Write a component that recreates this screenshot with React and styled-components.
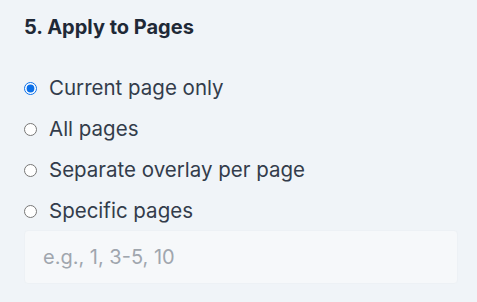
import React, { useState } from "react";
import styled, { createGlobalStyle } from "styled-components";

const Global = createGlobalStyle`
  html, body {
    margin: 0;
    padding: 0;
    background: #f0f4f8;
    font-family: Inter, "Noto Sans", sans-serif;
  }
`;

const Section = styled.section`
  padding: 13px 19px 0 24px;
`;

const Title = styled.h3`
  margin: 0 0 33px;
  font-size: 20px;
  font-weight: 700;
  color: #1f2937;
  line-height: 28px;
`;

const Options = styled.div`
  display: flex;
  flex-direction: column;
  gap: 13px;
`;

const Option = styled.label`
  display: flex;
  align-items: center;
  gap: 12px;
  font-size: 20.5px;
  font-weight: 400;
  line-height: 28px;
  color: #333c4b;
  cursor: pointer;

  input {
    margin: 0;
    width: 13px;
    height: 13px;
    accent-color: #0b6fe8;
  }
`;

const PagesInput = styled.input`
  margin-top: 5px;
  width: 100%;
  box-sizing: border-box;
  height: 54px;
  padding: 0 18px;
  border: 1px solid #edf1f5;
  border-radius: 4px;
  background: #f6f8fa;
  font-family: inherit;
  font-size: 20px;
  color: #374151;
  outline: none;

  &::placeholder {
    color: #a0a6ae;
  }
`;

const options = [
  { value: "current", label: "Current page only" },
  { value: "all", label: "All pages" },
  { value: "separate", label: "Separate overlay per page" },
  { value: "specific", label: "Specific pages" },
];

export default function App() {
  const [mode, setMode] = useState("current");
  return (
    <>
      <Global />
      <Section>
        <Title>5. Apply to Pages</Title>
        <Options>
          {options.map((o) => (
            <Option key={o.value}>
              <input
                type="radio"
                name="apply"
                checked={mode === o.value}
                onChange={() => setMode(o.value)}
              />
              {o.label}
            </Option>
          ))}
        </Options>
        <PagesInput placeholder="e.g., 1, 3-5, 10" />
      </Section>
    </>
  );
}
